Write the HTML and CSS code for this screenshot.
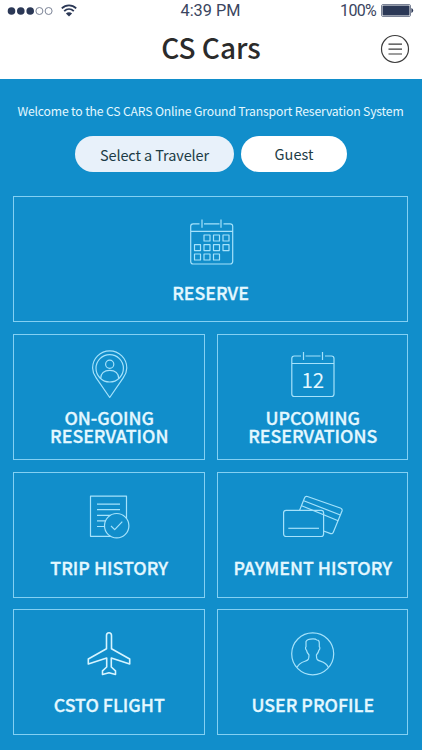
FILE: index.html
```
<!DOCTYPE html>
<html lang="en">
  <head>
    <meta charset="utf-8">
    <title>CS Cars</title>
    <link rel="stylesheet" href="styles.css">
  </head>
  <body>
    <div class="status-bar">
      <div class="status-left">
        <svg class="signal" width="46" height="10" viewBox="0 0 46 10">
          <circle class="dot" cx="4.5" cy="5" r="3.8" />
          <circle class="dot" cx="13.8" cy="5" r="3.8" />
          <circle class="dot" cx="23.2" cy="5" r="3.8" />
          <circle class="ring" cx="32.4" cy="5" r="3.5" />
          <circle class="ring" cx="41.6" cy="5" r="3.5" />
        </svg>
        <svg class="wifi" width="16" height="13" viewBox="0 0 16 13">
          <path d="M0.8 4.4 C5 0.3 11 0.3 15.2 4.4" />
          <path d="M3.2 7.2 C6 4.4 10 4.4 12.8 7.2" />
          <path class="fan" d="M4.9 9.5 C6.7 7.7 9.3 7.7 11.1 9.5 L8 12.5 Z" />
        </svg>
      </div>
      <div class="status-time">4:39 PM</div>
      <div class="status-right">
        <span class="percent">100%</span>
        <svg class="battery" width="33" height="13" viewBox="0 0 33 13">
          <rect class="case" x="0.5" y="0.5" width="29" height="12" rx="1.5" />
          <rect class="charge" x="1.5" y="1.5" width="27" height="10" rx="1" />
          <path class="charge" d="M30.4 4 Q32.2 4.6 32.2 6.5 T30.4 9 Z" />
        </svg>
      </div>
    </div>

    <header class="header">
      <h1>CS Cars</h1>
      <button class="menu-btn" aria-label="Menu">
        <svg width="30" height="30" viewBox="0 0 30 30">
          <circle cx="15" cy="15" r="13.5" />
          <path d="M8.5 10.2 H22 M8.5 15.2 H22 M8.5 20 H22" />
        </svg>
      </button>
    </header>

    <main class="content">
      <p class="welcome">Welcome to the CS CARS Online Ground Transport Reservation System</p>

      <div class="traveler">
        <button class="pill pill-select">Select a Traveler</button>
        <button class="pill pill-guest">Guest</button>
      </div>

      <div class="tiles">
        <a class="tile tile-wide">
          <svg class="icon" viewBox="0 0 64 50">
            <path d="M20.5 7.8 H14.2 a2.5 2.5 0 0 0 -2.5 2.5 V45.5 a2.5 2.5 0 0 0 2.5 2.5 H51.2 a2.5 2.5 0 0 0 2.5 -2.5 V10.3 a2.5 2.5 0 0 0 -2.5 -2.5 H44.5 M25 7.8 H40.5 M11.7 15.3 H53.7 M23 3.5 V11.8 M42 3.5 V11.8" />
            <path d="M25 19 h6 v6 h-6z M34.5 19 h6 v6 h-6z M44 19 h6 v6 h-6z M15.5 28.6 h6 v6 h-6z M25 28.6 h6 v6 h-6z M34.5 28.6 h6 v6 h-6z M44 28.6 h6 v6 h-6z M15.5 38 h6 v6 h-6z M25 38 h6 v6 h-6z M34.5 38 h6 v6 h-6z" />
          </svg>
          <span class="label">RESERVE</span>
        </a>

        <a class="tile tile-double">
          <svg class="icon" viewBox="0 0 64 50">
            <path d="M32.7 49.5 L19.2 29.8 C17 26.8 15.6 23.5 15.6 20 a17.1 17.1 0 0 1 34.2 0 C49.8 23.5 48.4 26.8 46.2 29.8 Z" />
            <circle cx="32.7" cy="20.3" r="13.7" />
            <circle cx="32.7" cy="16.3" r="4.1" />
            <path d="M23.7 30.5 C23.7 25.5 27.2 22.3 32.7 22.3 S41.7 25.5 41.7 30.5" />
          </svg>
          <span class="label">ON-GOING<br>RESERVATION</span>
        </a>

        <a class="tile tile-double">
          <svg class="icon" viewBox="0 0 64 50">
            <path d="M20 8 H13.3 a2.5 2.5 0 0 0 -2.5 2.5 V46 a2.5 2.5 0 0 0 2.5 2.5 H50.5 a2.5 2.5 0 0 0 2.5 -2.5 V10.5 a2.5 2.5 0 0 0 -2.5 -2.5 H44 M24.5 8 H39.5 M10.8 15.5 H53 M22.5 4 V12 M41.5 4 V12" />
            <text x="31.8" y="39.5">12</text>
          </svg>
          <span class="label">UPCOMING<br>RESERVATIONS</span>
        </a>

        <a class="tile">
          <svg class="icon" viewBox="0 0 64 50">
            <path d="M49.5 26.4 V4.2 H13.5 V44.3 H34" />
            <path d="M20 12.2 H43 M20 17.7 H43 M20 23.4 H33.5 M20 28.8 H29 M20 34.5 H27.5" />
            <circle cx="39.7" cy="33.7" r="12.2" />
            <path d="M34 34 L37.7 37.7 L45.3 29.7" />
          </svg>
          <span class="label">TRIP HISTORY</span>
        </a>

        <a class="tile">
          <svg class="icon" viewBox="0 0 64 50">
            <rect x="2.6" y="18.3" width="40" height="26.2" rx="2.5" />
            <path d="M7.3 36.3 H38" />
            <path d="M18.6 18.3 L23.6 5.8 Q24.4 3.8 26.4 4.5 L59.3 16 Q61.7 16.9 61 19 L52.3 40.2 Q51.4 42.4 49 41.4 L42.6 39" />
            <path d="M22.7 8.7 L59.3 23 M20.6 13.7 L57.2 28.7" />
          </svg>
          <span class="label">PAYMENT HISTORY</span>
        </a>

        <a class="tile">
          <svg class="icon icon-plane" viewBox="0 0 64 50">
            <path d="M32 3.8 Q34.5 3.8 34.5 6.5 V19.8 L52.7 30 V35 L34.3 29 V38 L38.5 41.8 V45.5 L32 43.8 L25.5 45.5 V41.8 L29.7 38 V29 L11.3 35 V30 L29.5 19.8 V6.5 Q29.5 3.8 32 3.8 Z" />
          </svg>
          <span class="label">CSTO FLIGHT</span>
        </a>

        <a class="tile">
          <svg class="icon" viewBox="0 0 64 50">
            <circle cx="31.7" cy="24.8" r="21" />
            <path d="M16.2 38.3 C17.5 34.5 20.5 33.3 24 32.2 C27.4 31.2 27.9 30.3 28 26 C26.4 24.5 25.8 22.8 25.4 21 C24.4 20.5 24.3 18.3 25 17.8 V12.5 C26 10.3 29 9.8 32 9.8 C34 9.8 35.2 10.2 35.8 11 C38 11 38.4 12.8 38.3 14.5 V17.8 C39.1 18.3 39 20.5 38 21 C37.6 22.8 37 24.5 35.4 26 C35.5 30.3 36 31.2 39.4 32.2 C42.9 33.3 45.9 34.5 47.2 38.3" />
          </svg>
          <span class="label">USER PROFILE</span>
        </a>
      </div>
    </main>
  </body>
</html>
```
FILE: styles.css
```
* {
  box-sizing: border-box;
  margin: 0;
  padding: 0;
}

body {
  width: 422px;
  height: 750px;
  overflow: hidden;
  background: #118ecb;
  font-family: "Noto Sans CJK SC", "Noto Sans", sans-serif;
}

button {
  border: none;
  background: none;
  font-family: inherit;
}

svg {
  display: block;
  fill: none;
}

/* status bar */
.status-bar {
  display: grid;
  grid-template-columns: 1fr auto 1fr;
  align-items: center;
  height: 22px;
  padding: 0 8px 0 7px;
  background: #ffffff;
  font-family: Roboto, sans-serif;
  font-size: 16.3px;
  line-height: 22px;
  color: #3a4560;
}

.status-left,
.status-right {
  display: flex;
  align-items: center;
}

.status-left {
  gap: 8px;
}

.status-right {
  justify-content: flex-end;
  gap: 5px;
}

.percent {
  font-size: 16px;
  letter-spacing: -0.7px;
}

.battery {
  margin-bottom: 1px;
}

.dot,
.charge,
.wifi .fan {
  fill: #2b3856;
}

.ring,
.case {
  stroke: #7b8396;
}

.wifi {
  margin-bottom: 2px;
  stroke: #2b3856;
  stroke-width: 1.8;
}

.wifi .fan {
  stroke: none;
}

/* header */
.header {
  display: grid;
  grid-template-columns: 1fr auto 1fr;
  align-items: center;
  height: 57px;
  padding: 0 12px;
  background: #ffffff;
}

.header h1 {
  grid-column: 2;
  margin-bottom: 8px;
  font-size: 28px;
  font-weight: 500;
  line-height: 46px;
  color: #2b2b2b;
}

.menu-btn {
  justify-self: end;
  margin-bottom: 4px;
  stroke: #3c3c3c;
  stroke-width: 1.2;
}

/* content */
.content {
  padding: 22px 14px 0 13px;
}

.welcome {
  font-size: 12.2px;
  line-height: 20px;
  letter-spacing: -0.16px;
  text-align: center;
  white-space: nowrap;
  color: #e4f8ff;
}

.traveler {
  display: flex;
  gap: 7px;
  margin: 15px 0 24px 62px;
}

.pill {
  height: 36px;
  border-radius: 18px;
  background: #ffffff;
  font-size: 14.5px;
  line-height: 36px;
  color: #1d3c46;
}

.pill-select {
  width: 159px;
  padding-top: 1px;
  background: #e8f1fa;
  letter-spacing: -0.1px;
}

.pill-guest {
  width: 106px;
}

/* tiles */
.tiles {
  display: grid;
  grid-template-columns: 1fr 1fr;
  grid-auto-rows: 126px;
  gap: 11.8px 12px;
}

.tile {
  display: flex;
  flex-direction: column;
  align-items: center;
  padding: 19px 0 0 1px;
  border: 1px solid #83d0f3;
}

.tile-wide {
  grid-column: span 2;
  padding-left: 0;
}

.tile-double {
  padding-top: 13px;
}

.icon {
  width: 64px;
  height: 50px;
  stroke: #a5e2fb;
  stroke-width: 1.2;
  stroke-linejoin: round;
}

.icon text {
  fill: #e4f8ff;
  stroke: none;
  font-size: 20.5px;
  text-anchor: middle;
}

.icon-plane {
  stroke: #d5f4ff;
  stroke-width: 1.6;
}

.label {
  margin-top: 16px;
  font-size: 17.8px;
  font-weight: 500;
  line-height: 18px;
  text-align: center;
  white-space: nowrap;
  color: #e4f8ff;
  -webkit-text-stroke: 0.3px #e4f8ff;
}

.tile-wide .label {
  margin-top: 17px;
}

.tile-double .label {
  margin-top: 10px;
}
```
